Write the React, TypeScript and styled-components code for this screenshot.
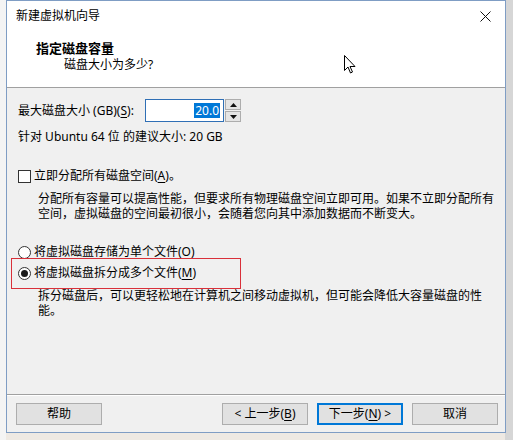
import styled, { createGlobalStyle } from "styled-components";

const GlobalStyle = createGlobalStyle`
  html, body {
    margin: 0;
    padding: 0;
    background: #eee9e3;
  }
  body {
    font-family: "Noto Sans", "Noto Sans CJK SC", sans-serif;
    font-size: 12px;
    color: #000;
  }
`;

const Desktop = styled.div`
  width: 513px;
  height: 440px;
  overflow: hidden;
  display: flex;
  background: linear-gradient(to right, #f4f4f4 0 6px, #eee9e3 6px 505px, #d6d6d6 505px);
`;

const Window = styled.div`
  position: relative;
  box-sizing: border-box;
  margin-left: 6px;
  width: 500px;
  height: 433px;
  border: 1px solid #7f9dc4;
  background: #f0f0f0;
  display: flex;
  flex-direction: column;
`;

const TitleBar = styled.div`
  height: 29px;
  background: #fff;
  display: flex;
  align-items: center;
  padding-left: 9px;
  padding-right: 6px;
  padding-top: 1px;
  box-sizing: border-box;
  line-height: 16px;
`;

const Title = styled.span`
  flex: 1;
`;

const CloseButton = styled.span`
  width: 28px;
  height: 28px;
  display: flex;
  align-items: center;
  justify-content: center;
`;

const Header = styled.div`
  box-sizing: border-box;
  height: 58px;
  background: #fff;
  border-bottom: 1px solid #a0a0a0;
  padding: 10px 0 0 29px;
  line-height: 16px;
`;

const HeaderTitle = styled.div`
  font-size: 13px;
  font-weight: 700;
  line-height: 17px;
`;

const HeaderSub = styled.div`
  padding-left: 28px;
`;

const Body = styled.div`
  flex: 1;
  padding: 11px 0 0 11px;
  display: flex;
  flex-direction: column;
`;

const SizeRow = styled.div`
  display: flex;
  align-items: center;
  height: 23px;
`;

const FieldLabel = styled.span`
  width: 127px;
  line-height: 16px;
`;

const Spin = styled.div`
  display: flex;
  height: 23px;
`;

const NumberBox = styled.div`
  box-sizing: border-box;
  width: 79px;
  height: 23px;
  border: 1px solid #2f6fb5;
  background: #fff;
  display: flex;
  align-items: center;
  justify-content: flex-end;
  padding-right: 3px;
`;

const Selected = styled.span`
  background: #0078d7;
  color: #fff;
  line-height: 15px;
  padding: 0 1px;
`;

const Arrows = styled.div`
  margin-left: 1px;
  width: 16px;
  display: flex;
  flex-direction: column;
  gap: 1px;
`;

const ArrowButton = styled.div`
  box-sizing: border-box;
  flex: 1;
  border: 1px solid #adadad;
  background: #e5e5e5;
  display: flex;
  align-items: center;
  justify-content: center;
`;

const TextLine = styled.div<{ $top: number }>`
  margin-top: ${({ $top }) => $top}px;
  line-height: 16px;
`;

const Description = styled.p<{ $top: number }>`
  margin: ${({ $top }) => $top}px 0 0;
  padding-left: 20px;
  width: 460px;
  line-height: 15px;
`;

const OptionRow = styled.label<{ $top: number }>`
  position: relative;
  margin-top: ${({ $top }) => $top}px;
  display: flex;
  align-items: center;
  gap: 3px;
  height: 18px;
  line-height: 16px;
`;

const CheckBox = styled.span`
  box-sizing: border-box;
  width: 13px;
  height: 13px;
  border: 1px solid #333;
  background: #fff;
`;

const Radio = styled.span<{ $checked?: boolean }>`
  box-sizing: border-box;
  width: 13px;
  height: 13px;
  border-radius: 50%;
  border: 1px solid #333;
  background: #fff;
  display: flex;
  align-items: center;
  justify-content: center;

  &::after {
    content: "";
    display: ${({ $checked }) => ($checked ? "block" : "none")};
    width: 7px;
    height: 7px;
    border-radius: 50%;
    background: #1a1a1a;
  }
`;

// red annotation frame drawn over the selected option
const Marker = styled.span`
  position: absolute;
  left: -7px;
  top: -6px;
  width: 228px;
  height: 29px;
  border: 1px solid #d9303a;
  pointer-events: none;
`;

const Key = styled.u`
  text-underline-offset: 2px;
`;

const Footer = styled.div`
  height: 38px;
  border-top: 1px solid #a0a0a0;
  box-shadow: inset 0 1px 0 #fff;
  box-sizing: border-box;
  padding: 8px 7px 0 9px;
  display: flex;
  align-items: flex-start;
`;

const Nav = styled.div`
  margin-left: auto;
  display: flex;
  gap: 9px;
`;

const Button = styled.button<{ $default?: boolean }>`
  box-sizing: border-box;
  width: 86px;
  height: 22px;
  padding: 0;
  border: ${({ $default }) => ($default ? "2px solid #0078d7" : "1px solid #adadad")};
  background: #e1e1e1;
  font: inherit;
  color: #000;
  line-height: 16px;
`;

const Pointer = styled.svg`
  position: absolute;
  left: 337px;
  top: 54px;
`;

export default function App() {
  return (
    <>
      <GlobalStyle />
      <Desktop>
        <Window>
          <TitleBar>
            <Title>新建虚拟机向导</Title>
            <CloseButton>
              <svg width="11" height="11" viewBox="0 0 11 11">
                <path d="M0.5 0.5 L10.5 10.5 M10.5 0.5 L0.5 10.5" stroke="#111" strokeWidth="1" />
              </svg>
            </CloseButton>
          </TitleBar>
          <Header>
            <HeaderTitle>指定磁盘容量</HeaderTitle>
            <HeaderSub>磁盘大小为多少?</HeaderSub>
          </Header>
          <Body>
            <SizeRow>
              <FieldLabel>
                最大磁盘大小 (GB)(<Key>S</Key>):
              </FieldLabel>
              <Spin>
                <NumberBox>
                  <Selected>20.0</Selected>
                </NumberBox>
                <Arrows>
                  <ArrowButton>
                    <svg width="7" height="4" viewBox="0 0 7 4">
                      <path d="M3.5 0 L7 4 L0 4 Z" fill="#111" />
                    </svg>
                  </ArrowButton>
                  <ArrowButton>
                    <svg width="7" height="4" viewBox="0 0 7 4">
                      <path d="M0 0 L7 0 L3.5 4 Z" fill="#111" />
                    </svg>
                  </ArrowButton>
                </Arrows>
              </Spin>
            </SizeRow>
            <TextLine $top={7}>针对 Ubuntu 64 位 的建议大小: 20 GB</TextLine>

            <OptionRow $top={22}>
              <CheckBox />
              <span>
                立即分配所有磁盘空间(<Key>A</Key>)。
              </span>
            </OptionRow>
            <Description $top={6}>
              分配所有容量可以提高性能，但要求所有物理磁盘空间立即可用。如果不立即分配所有空间，虚拟磁盘的空间最初很小，会随着您向其中添加数据而不断变大。
            </Description>

            <OptionRow $top={22}>
              <Radio />
              <span>
                将虚拟磁盘存储为单个文件(<Key>O</Key>)
              </span>
            </OptionRow>
            <OptionRow $top={3}>
              <Radio $checked />
              <span>
                将虚拟磁盘拆分成多个文件(<Key>M</Key>)
              </span>
              <Marker />
            </OptionRow>
            <Description $top={6}>
              拆分磁盘后，可以更轻松地在计算机之间移动虚拟机，但可能会降低大容量磁盘的性能。
            </Description>
          </Body>
          <Footer>
            <Button>帮助</Button>
            <Nav>
              <Button>
                &lt; 上一步(<Key>B</Key>)
              </Button>
              <Button $default>
                下一步(<Key>N</Key>) &gt;
              </Button>
              <Button>取消</Button>
            </Nav>
          </Footer>
          <Pointer width="12" height="19" viewBox="0 0 12 19">
            <path
              d="M0.5 0.5 L0.5 15.5 L4 12 L6.5 18 L8.5 17 L6 11.5 L11 11.5 Z"
              fill="#fff"
              stroke="#000"
              strokeWidth="1"
              strokeLinejoin="round"
            />
          </Pointer>
        </Window>
      </Desktop>
    </>
  );
}
